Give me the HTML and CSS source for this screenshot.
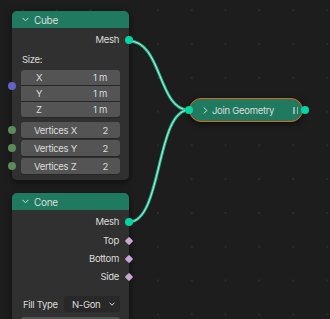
FILE: index.html
```html
<!DOCTYPE html>
<html lang="en">
<head>
    <meta charset="UTF-8">
    <title>Geometry Nodes</title>
    <link rel="stylesheet" href="styles.css">
</head>
<body>
    <div class="editor">
        <!-- Links -->
        <svg class="links" width="330" height="319" viewBox="0 0 330 319">
            <path class="wire-outer" d="M129 41 C 162 41, 158 110, 189 110" />
            <path class="wire-inner" d="M129 41 C 162 41, 158 110, 189 110" />
            <path class="wire-outer" d="M129 222 C 162 222, 156 110, 189 110" />
            <path class="wire-inner" d="M129 222 C 162 222, 156 110, 189 110" />
        </svg>

        <!-- Cube node -->
        <div class="node node-cube">
            <div class="node-header">
                <svg class="chev" width="7" height="5" viewBox="0 0 7 5"><polyline points="0.5,0.8 3.5,3.8 6.5,0.8" /></svg>
                Cube
            </div>
            <div class="node-body">
                <div class="out-row">Mesh<span class="socket geo"></span></div>
                <div class="label-row">Size:</div>
                <div class="vec-group">
                    <span class="socket vec"></span>
                    <div class="field"><span>X</span><span>1 m</span></div>
                    <div class="field"><span>Y</span><span>1 m</span></div>
                    <div class="field"><span>Z</span><span>1 m</span></div>
                </div>
                <div class="int-list">
                    <div class="field single"><span class="socket int"></span><span>Vertices X</span><span>2</span></div>
                    <div class="field single"><span class="socket int"></span><span>Vertices Y</span><span>2</span></div>
                    <div class="field single"><span class="socket int"></span><span>Vertices Z</span><span>2</span></div>
                </div>
            </div>
        </div>

        <!-- Cone node -->
        <div class="node node-cone">
            <div class="node-header">
                <svg class="chev" width="7" height="5" viewBox="0 0 7 5"><polyline points="0.5,0.8 3.5,3.8 6.5,0.8" /></svg>
                Cone
            </div>
            <div class="node-body">
                <div class="out-row">Mesh<span class="socket geo"></span></div>
                <div class="out-row small">Top<span class="socket diamond"></span></div>
                <div class="out-row small">Bottom<span class="socket diamond"></span></div>
                <div class="out-row small">Side<span class="socket diamond"></span></div>
                <div class="prop-row">
                    <span class="prop-label">Fill Type</span>
                    <div class="dropdown">
                        <span>N-Gon</span>
                        <svg class="drop-chev" width="6" height="4" viewBox="0 0 6 4"><polyline points="0.5,0.7 3,3.2 5.5,0.7" /></svg>
                    </div>
                </div>
                <div class="field single"></div>
            </div>
        </div>

        <!-- Join Geometry node (collapsed, selected) -->
        <div class="node-collapsed">
            <span class="socket geo in"></span>
            <svg class="chev-right" width="5" height="7" viewBox="0 0 5 7"><polyline points="0.8,0.5 3.8,3.5 0.8,6.5" /></svg>
            <span class="collapsed-title">Join Geometry</span>
            <span class="multi"><i></i><i></i></span>
            <span class="socket geo out"></span>
        </div>
    </div>
</body>
</html>
```

FILE: styles.css
```css
html, body {
    margin: 0;
    padding: 0;
    background-color: #1d1d1d;
}
.editor {
    position: relative;
    width: 330px;
    height: 319px;
    overflow: hidden;
    font-family: Inter, "DejaVu Sans", sans-serif;
    font-size: 9.5px;
    letter-spacing: -0.3px;
    color: #dcdcdc;
    background-color: #1d1d1d;
    background-image: radial-gradient(circle, #2c2c2c 1px, transparent 1.4px);
    background-size: 33.8px 33.8px;
    background-position: 5.9px 27.1px;
}
.links {
    position: absolute;
    left: 0;
    top: 0;
}
.wire-outer {
    fill: none;
    stroke: #24b48c;
    stroke-width: 3;
}
.wire-inner {
    fill: none;
    stroke: #b8f0de;
    stroke-width: 1;
}

/* nodes */
.node {
    position: absolute;
    left: 12px;
    width: 117px;
    background-color: #303030;
    border-radius: 5px;
    box-shadow: 0 2px 6px rgba(0, 0, 0, 0.55);
}
.node-cube {
    top: 11px;
}
.node-cone {
    top: 193px;
    height: 140px;
}
.node-header {
    display: flex;
    align-items: center;
    height: 17px;
    background-color: #1f7a5f;
    border-radius: 5px 5px 0 0;
    padding-left: 10px;
    font-size: 10px;
}
.chev {
    margin-right: 5px;
}
.chev polyline,
.drop-chev polyline,
.chev-right polyline {
    fill: none;
    stroke: #dcdcdc;
    stroke-width: 1;
}
.node-body {
    padding: 2px 9px 6px 9px;
}
.out-row {
    position: relative;
    height: 20px;
    line-height: 20px;
    text-align: right;
    padding-right: 1px;
}
.out-row.small {
    height: 18px;
    line-height: 18px;
}
.label-row {
    height: 20px;
    line-height: 20px;
    padding-left: 1px;
}

/* sockets */
.socket {
    position: absolute;
    width: 8px;
    height: 8px;
    border-radius: 50%;
}
.out-row .socket {
    right: -13px;
    top: 50%;
    margin-top: -4px;
}
.socket.geo {
    background-color: #00d6a3;
}
.socket.vec {
    background-color: #6363c7;
    left: -13px;
    top: 12px;
}
.socket.int {
    background-color: #598c5c;
    left: -13px;
    top: 4px;
}
.socket.diamond {
    width: 6px;
    height: 6px;
    border-radius: 1px;
    background-color: #cca6d6;
    transform: rotate(45deg);
    margin-top: -3px;
    right: -12px;
}

/* fields */
.vec-group {
    position: relative;
    display: flex;
    flex-direction: column;
    gap: 1px;
}
.field {
    position: relative;
    display: flex;
    justify-content: space-between;
    align-items: center;
    height: 15px;
    padding: 0 13px 0 15px;
    background-color: #545454;
    box-shadow: 0 1px 0 #262626;
}
.vec-group .field:first-of-type {
    border-radius: 3px 3px 0 0;
}
.vec-group .field:last-of-type {
    border-radius: 0 0 3px 3px;
}
.int-list {
    display: flex;
    flex-direction: column;
    gap: 2px;
    margin-top: 5px;
}
.field.single {
    height: 16px;
    border-radius: 3px;
    padding: 0 12px 0 13px;
}

/* cone props */
.prop-row {
    display: flex;
    align-items: center;
    justify-content: space-between;
    height: 16px;
    margin-top: 10px;
    margin-bottom: 5px;
}
.prop-label {
    padding-left: 2px;
}
.dropdown {
    display: flex;
    justify-content: space-between;
    align-items: center;
    width: 56px;
    height: 16px;
    box-sizing: border-box;
    padding: 0 5px 0 8px;
    background-color: #282828;
    border-radius: 3px;
}

/* collapsed node */
.node-collapsed {
    position: absolute;
    left: 189px;
    top: 98px;
    width: 114px;
    height: 24px;
    box-sizing: border-box;
    background-color: #1f7a5f;
    border: 1.5px solid #e0631c;
    border-radius: 12px;
    display: flex;
    align-items: center;
    padding-left: 13px;
    box-shadow: 0 2px 6px rgba(0, 0, 0, 0.55);
}
.socket.in {
    left: -5px;
    top: 7px;
}
.socket.out {
    right: -7px;
    top: 7px;
}
.chev-right {
    margin-right: 4px;
}
.collapsed-title {
    flex: 1;
}
.multi {
    display: flex;
    gap: 2px;
    margin-right: 4px;
}
.multi i {
    display: block;
    width: 1.5px;
    height: 7px;
    background-color: #8fb8aa;
}
```
